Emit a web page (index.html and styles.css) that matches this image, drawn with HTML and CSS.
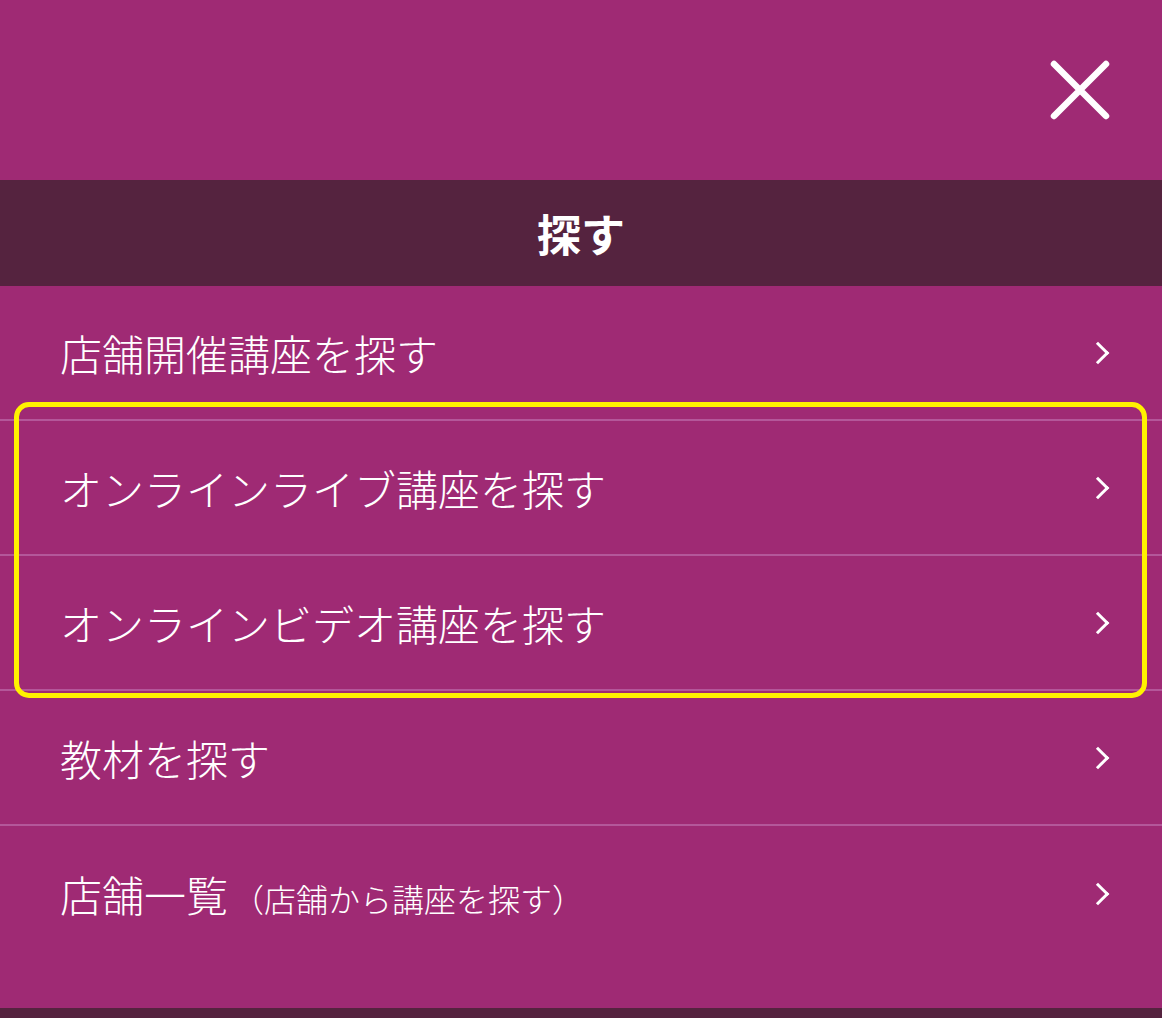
FILE: index.html
```html
<!DOCTYPE html>
<html lang="ja">
<head>
  <meta charset="UTF-8">
  <meta name="viewport" content="width=device-width, initial-scale=1">
  <title>探す</title>
  <link rel="stylesheet" href="styles.css">
</head>
<body>
  <div class="menu">
    <div class="menu-head">
      <button class="close" aria-label="閉じる">
        <svg width="60" height="60" viewBox="0 0 60 60">
          <path d="M4 4 L56 56 M56 4 L4 56" stroke="#fff" stroke-width="6.5" stroke-linecap="round" fill="none"/>
        </svg>
      </button>
    </div>

    <h2 class="menu-title">探す</h2>

    <ul class="menu-list">
      <li><a href="#">店舗開催講座を探す<span class="chev"></span></a></li>
      <li><a href="#">オンラインライブ講座を探す<span class="chev"></span></a></li>
      <li><a href="#">オンラインビデオ講座を探す<span class="chev"></span></a></li>
      <li><a href="#">教材を探す<span class="chev"></span></a></li>
      <li><a href="#"><span>店舗一覧<small>（店舗から講座を探す）</small></span><span class="chev"></span></a></li>
      <div class="highlight"></div>
    </ul>

    <div class="menu-foot"></div>
  </div>
</body>
</html>
```

FILE: styles.css
```css
* { box-sizing: border-box; }
body {
  margin: 0;
  background: #9f2a74;
  font-family: 'Noto Sans CJK JP', 'Noto Sans', sans-serif;
  color: #fff;
}
.menu {
  background: #9f2a74;
}
.menu-head {
  height: 180px;
  display: flex;
  justify-content: flex-end;
  align-items: center;
  padding-right: 52px;
}
.close {
  background: none;
  border: none;
  padding: 0;
  width: 60px;
  height: 60px;
  cursor: pointer;
}
.close svg {
  display: block;
}
.menu-title {
  margin: 0;
  height: 106px;
  background: #55233f;
  display: flex;
  align-items: center;
  justify-content: center;
  font-size: 44px;
  font-weight: bold;
  line-height: 1;
}
.menu-list {
  list-style: none;
  margin: 0;
  padding: 0 0 47px;
  position: relative;
}
.menu-list li {
  height: 135px;
  border-bottom: 2px solid #b4579a;
}
.menu-list li:last-of-type {
  border-bottom: none;
}
.menu-list a {
  height: 100%;
  display: flex;
  align-items: center;
  justify-content: space-between;
  padding: 0 56px 0 60px;
  color: #fff;
  text-decoration: none;
  font-size: 42px;
  font-weight: 300;
  line-height: 1;
}
.menu-list small {
  font-size: 32px;
  margin-left: 4px;
}
.chev {
  width: 16px;
  height: 16px;
  border-top: 3.5px solid #fff;
  border-right: 3.5px solid #fff;
  transform: rotate(45deg);
}
.highlight {
  position: absolute;
  left: 14px;
  top: 116px;
  width: 1133px;
  height: 296px;
  border: 5px solid #fff200;
  border-radius: 15px;
  pointer-events: none;
}
.menu-foot {
  height: 10px;
  background: #55233f;
}
```
